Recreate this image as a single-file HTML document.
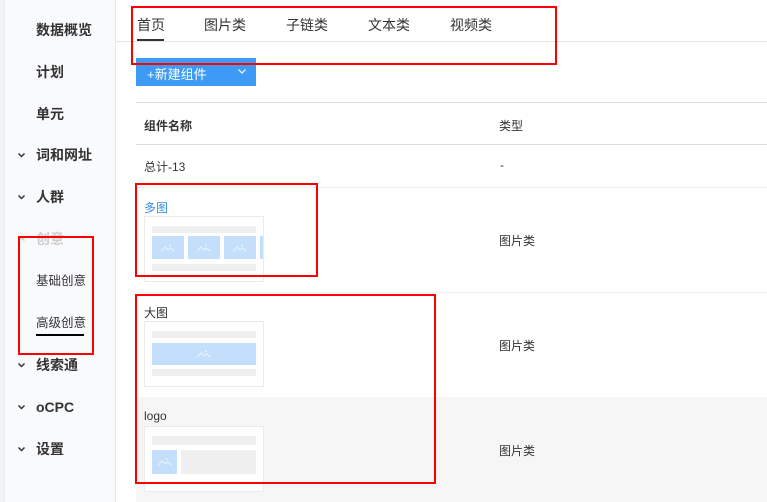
<!DOCTYPE html>
<html><head><meta charset="utf-8"><style>
*{margin:0;padding:0;box-sizing:border-box}
body{width:767px;height:502px;overflow:hidden;background:#fff;position:relative;font-family:"Liberation Sans","Noto Sans CJK SC",sans-serif;color:#333}
.a{position:absolute;white-space:nowrap}
.side{position:absolute;left:0;top:0;width:116px;height:502px;background:#f9fafc;border-right:1px solid #e8e8e8}
.side .strip{position:absolute;left:0;top:0;width:5px;height:502px;background:#f2f3f6;border-right:1px solid #ececec}
.si{position:absolute;left:36px;font-size:14px;font-weight:bold;color:#333;line-height:16px}
.chev{position:absolute;left:17px;width:9px;height:6px}
.tab{position:absolute;top:15px;font-size:14px;color:#333}
.hl{position:absolute;height:1px;background:#e5e5e5}
.red{position:absolute;border:2px solid #f00}
.card{position:absolute;left:144px;width:120px;height:66px;border:1px solid #ebebeb;background:#fff;overflow:hidden}
.g{position:absolute;background:#efefef}
.b{position:absolute;background:#c3dffb}
.b svg{position:absolute;left:50%;top:50%;width:14px;height:8px;margin:-4px 0 0 -7px}
.td{position:absolute;font-size:12px;color:#333}
</style></head><body>
<svg width="0" height="0" style="position:absolute"><defs>
<symbol id="dn" viewBox="0 0 9 6"><polyline points="1.5,1.5 4.5,4.5 7.5,1.5" fill="none" stroke="#333" stroke-width="1.5"/></symbol>
<symbol id="mt" viewBox="0 0 14 8"><polyline points="0.5,7 4,3 7,6 9.5,4 13.5,7" fill="none" stroke="#e8f2fd" stroke-width="1.2"/><circle cx="9" cy="1.2" r="1" fill="#e8f2fd"/></symbol>
</defs></svg>
<div class="side"><div class="strip"></div>
<div class="si" style="top:22px">数据概览</div>
<div class="si" style="top:64px">计划</div>
<div class="si" style="top:106px">单元</div>
<svg class="chev" style="top:152px"><use href="#dn"/></svg><div class="si" style="top:147px">词和网址</div>
<svg class="chev" style="top:194px"><use href="#dn"/></svg><div class="si" style="top:189px">人群</div>
<svg class="chev" style="top:236px;transform:rotate(180deg);opacity:.25"><use href="#dn"/></svg><div class="si" style="top:231px;color:#ccc">创意</div>
<div class="si" style="top:273px;font-weight:normal;font-size:12.5px">基础创意</div>
<div class="si" style="top:315px;font-weight:normal;font-size:12.5px">高级创意</div>
<div class="a" style="left:36px;top:334px;width:48px;height:2px;background:#000"></div>
<svg class="chev" style="top:362px"><use href="#dn"/></svg><div class="si" style="top:357px">线索通</div>
<svg class="chev" style="top:404px"><use href="#dn"/></svg><div class="si" style="top:399px">oCPC</div>
<svg class="chev" style="top:446px"><use href="#dn"/></svg><div class="si" style="top:441px">设置</div>
</div>

<div class="tab" style="left:137px">首页</div>
<div class="tab" style="left:204px">图片类</div>
<div class="tab" style="left:286px">子链类</div>
<div class="tab" style="left:368px">文本类</div>
<div class="tab" style="left:450px">视频类</div>
<div class="hl" style="left:116px;top:41px;width:651px"></div>
<div class="a" style="left:137px;top:39px;width:27px;height:2px;background:#333"></div>

<div class="a" style="left:136px;top:58px;width:120px;height:28px;background:#3d9bf6"></div>
<div class="a" style="left:147px;top:64px;font-size:13px;color:#fff">+新建组件</div>
<svg class="a" style="left:237px;top:68px" width="10" height="7" viewBox="0 0 10 7"><polyline points="1.5,1.5 5,5 8.5,1.5" fill="none" stroke="#fff" stroke-width="1.2"/></svg>

<div class="hl" style="left:136px;top:102px;width:631px;background:#ddd"></div>
<div class="td" style="left:144px;top:117px;font-weight:bold">组件名称</div>
<div class="td" style="left:499px;top:117px">类型</div>
<div class="hl" style="left:136px;top:144px;width:631px;background:#ddd"></div>
<div class="td" style="left:144px;top:158px">总计-13</div>
<div class="td" style="left:500px;top:158px">-</div>
<div class="hl" style="left:136px;top:187px;width:631px;background:#f0f0f0"></div>

<div class="td" style="left:144px;top:199px;color:#3a8ee6">多图</div>
<div class="card" style="top:216px">
<div class="g" style="left:7px;top:9px;width:104px;height:7px"></div>
<div class="b" style="left:7px;top:19px;width:32px;height:23px"><svg><use href="#mt"/></svg></div>
<div class="b" style="left:43px;top:19px;width:32px;height:23px"><svg><use href="#mt"/></svg></div>
<div class="b" style="left:79px;top:19px;width:32px;height:23px"><svg><use href="#mt"/></svg></div>
<div class="b" style="left:115px;top:19px;width:32px;height:23px"></div>
<div class="g" style="left:7px;top:47px;width:104px;height:7px"></div>
</div>
<div class="td" style="left:499px;top:232px">图片类</div>
<div class="hl" style="left:136px;top:292px;width:631px;background:#f0f0f0"></div>

<div class="td" style="left:144px;top:304px">大图</div>
<div class="card" style="top:321px">
<div class="g" style="left:7px;top:9px;width:104px;height:7px"></div>
<div class="b" style="left:7px;top:21px;width:104px;height:22px"><svg><use href="#mt"/></svg></div>
<div class="g" style="left:7px;top:47px;width:104px;height:7px"></div>
</div>
<div class="td" style="left:499px;top:337px">图片类</div>

<div class="a" style="left:136px;top:397px;width:631px;height:105px;background:#f6f6f6"></div>
<div class="td" style="left:144px;top:409px">logo</div>
<div class="card" style="top:426px">
<div class="g" style="left:7px;top:9px;width:104px;height:9px"></div>
<div class="b" style="left:7px;top:23px;width:25px;height:24px"><svg><use href="#mt"/></svg></div>
<div class="g" style="left:36px;top:23px;width:75px;height:24px"></div>
</div>
<div class="td" style="left:499px;top:442px">图片类</div>

<div class="red" style="left:131px;top:6px;width:426px;height:59px"></div>
<div class="red" style="left:135px;top:183px;width:183px;height:94px"></div>
<div class="red" style="left:135px;top:294px;width:301px;height:190px"></div>
<div class="red" style="left:18px;top:236px;width:76px;height:119px"></div>
</body></html>
